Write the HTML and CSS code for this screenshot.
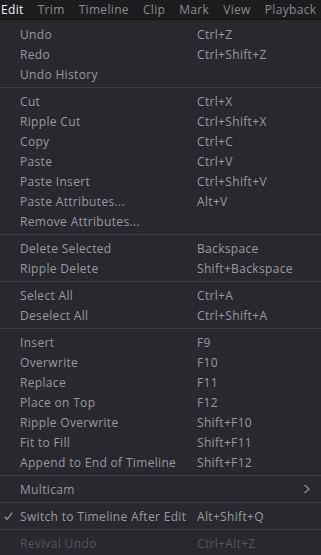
FILE: index.html
```html
<!DOCTYPE html>
<html>
<head>
<meta charset="utf-8">
<link rel="stylesheet" href="styles.css">
</head>
<body>
<div class="menubar">
  <span class="mb-item active">Edit</span>
  <span class="mb-item">Trim</span>
  <span class="mb-item">Timeline</span>
  <span class="mb-item">Clip</span>
  <span class="mb-item">Mark</span>
  <span class="mb-item">View</span>
  <span class="mb-item">Playback</span>
</div>
<div class="menu">
  <div class="item"><span class="label">Undo</span><span class="key">Ctrl+Z</span></div>
  <div class="item"><span class="label">Redo</span><span class="key">Ctrl+Shift+Z</span></div>
  <div class="item"><span class="label">Undo History</span><span class="key"></span></div>
  <div class="sep"></div>
  <div class="item"><span class="label">Cut</span><span class="key">Ctrl+X</span></div>
  <div class="item"><span class="label">Ripple Cut</span><span class="key">Ctrl+Shift+X</span></div>
  <div class="item"><span class="label">Copy</span><span class="key">Ctrl+C</span></div>
  <div class="item"><span class="label">Paste</span><span class="key">Ctrl+V</span></div>
  <div class="item"><span class="label">Paste Insert</span><span class="key">Ctrl+Shift+V</span></div>
  <div class="item"><span class="label">Paste Attributes...</span><span class="key">Alt+V</span></div>
  <div class="item"><span class="label">Remove Attributes...</span><span class="key"></span></div>
  <div class="sep"></div>
  <div class="item"><span class="label">Delete Selected</span><span class="key">Backspace</span></div>
  <div class="item"><span class="label">Ripple Delete</span><span class="key">Shift+Backspace</span></div>
  <div class="sep"></div>
  <div class="item"><span class="label">Select All</span><span class="key">Ctrl+A</span></div>
  <div class="item"><span class="label">Deselect All</span><span class="key">Ctrl+Shift+A</span></div>
  <div class="sep"></div>
  <div class="item"><span class="label">Insert</span><span class="key">F9</span></div>
  <div class="item"><span class="label">Overwrite</span><span class="key">F10</span></div>
  <div class="item"><span class="label">Replace</span><span class="key">F11</span></div>
  <div class="item"><span class="label">Place on Top</span><span class="key">F12</span></div>
  <div class="item"><span class="label">Ripple Overwrite</span><span class="key">Shift+F10</span></div>
  <div class="item"><span class="label">Fit to Fill</span><span class="key">Shift+F11</span></div>
  <div class="item"><span class="label">Append to End of Timeline</span><span class="key">Shift+F12</span></div>
  <div class="sep"></div>
  <div class="item submenu"><span class="label">Multicam</span><span class="key"></span>
    <svg class="arrow" width="8" height="10" viewBox="0 0 8 10"><path d="M1.5 1 L6 5 L1.5 9" fill="none" stroke="#8a8a8e" stroke-width="1.4"/></svg>
  </div>
  <div class="sep"></div>
  <div class="item checked">
    <svg class="check" width="9" height="9" viewBox="0 0 9 9"><path d="M0.8 4.8 L3 7.5 L8.2 0.8" fill="none" stroke="#8e8e92" stroke-width="1.4"/></svg>
    <span class="label">Switch to Timeline After Edit</span><span class="key">Alt+Shift+Q</span></div>
  <div class="sep"></div>
  <div class="item disabled"><span class="label">Revival Undo</span><span class="key">Ctrl+Alt+Z</span></div>
</div>
</body>
</html>
```
FILE: styles.css
```css
html, body {
  margin: 0;
  padding: 0;
  background: #28282e;
}
body {
  width: 321px;
  height: 555px;
  overflow: hidden;
  font-family: "Open Sans", "DejaVu Sans", sans-serif;
  font-size: 12px;
  letter-spacing: 0.33px;
}
.menubar {
  height: 19px;
  background: #1c1c1f;
  border-bottom: 1px solid #131315;
  display: flex;
  align-items: center;
  white-space: nowrap;
  padding-left: 1px;
}
.mb-item {
  color: #8a8a8e;
  font-size: 12px;
  padding: 0 7px;
  line-height: 19px;
}
.mb-item.active {
  color: #f2f2f2;
  padding-left: 0;
}
.menu {
  padding-top: 4px;
}
.item {
  position: relative;
  height: 20px;
  display: flex;
  align-items: center;
  color: #9a9a9e;
  white-space: nowrap;
}
.label {
  width: 177px;
  padding-left: 20px;
  flex: none;
}
.key {
  flex: none;
}
.disabled {
  color: #56565b;
}
.sep {
  height: 1px;
  background: #3e3e44;
  margin: 3px 0;
}
.check {
  position: absolute;
  left: 4px;
  top: 6px;
}
.arrow {
  position: absolute;
  right: 10px;
  top: 5px;
}
```
